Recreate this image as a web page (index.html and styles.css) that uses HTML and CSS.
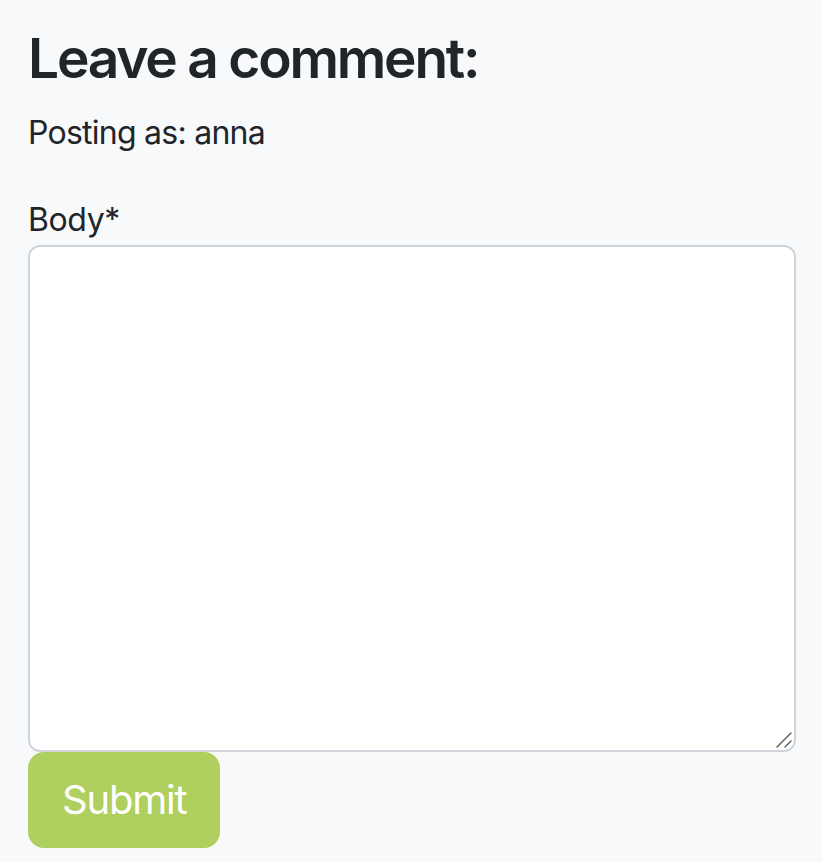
FILE: index.html
```html
<!DOCTYPE html>
<html lang="en">
<head>
<meta charset="utf-8">
<title>Leave a comment</title>
<link rel="stylesheet" href="styles.css">
</head>
<body>
<main class="page">
  <h3 class="title">Leave a comment:</h3>
  <p class="posting">Posting as: anna</p>
  <form class="comment-form">
    <label class="field-label" for="body">Body*</label>
    <div class="textarea-wrap">
      <textarea id="body" class="field-textarea"></textarea>
      <svg class="grip" width="18" height="18" viewBox="0 0 18 18" aria-hidden="true">
        <path d="M2 16 L16 2 M10 16 L16 10" stroke="#6b6b6b" stroke-width="1.6" stroke-linecap="round"/>
      </svg>
    </div>
    <button type="submit" class="btn-submit">Submit</button>
  </form>
</main>
</body>
</html>
```

FILE: styles.css
```css
html, body {
  margin: 0;
  padding: 0;
  background: #f8f9fa;
}
body {
  font-family: Inter, "Noto Sans", "Liberation Sans", sans-serif;
  color: #212529;
}
.page {
  padding: 25px 26px 0 28px;
}
.title {
  margin: 0 0 17px;
  font-size: 55px;
  line-height: 67px;
  font-weight: 600;
  letter-spacing: -2.2px;
}
.posting {
  margin: 0 0 39px;
  font-size: 32px;
  line-height: 48px;
  letter-spacing: -0.75px;
}
.comment-form {
  display: flex;
  flex-direction: column;
  align-items: flex-start;
}
.field-label {
  display: block;
  font-size: 32px;
  line-height: 48px;
  margin-bottom: 1px;
  letter-spacing: -0.4px;
}
.textarea-wrap {
  position: relative;
  width: 100%;
  display: flex;
}
.field-textarea {
  box-sizing: border-box;
  width: 100%;
  height: 507px;
  margin: 0;
  border: 2px solid #ced4da;
  border-radius: 12px;
  background: #fff;
  resize: none;
  font: inherit;
  padding: 12px 24px;
  outline: none;
}
.grip {
  position: absolute;
  right: 3px;
  bottom: 3px;
}
.btn-submit {
  box-sizing: border-box;
  height: 96px;
  padding: 0 32px;
  border: 2px solid #afcf5e;
  border-radius: 16px;
  background: #afcf5e;
  color: #fff;
  font-family: inherit;
  font-size: 40px;
  line-height: 60px;
  font-weight: 400;
  letter-spacing: -1.2px;
  cursor: pointer;
}
```
